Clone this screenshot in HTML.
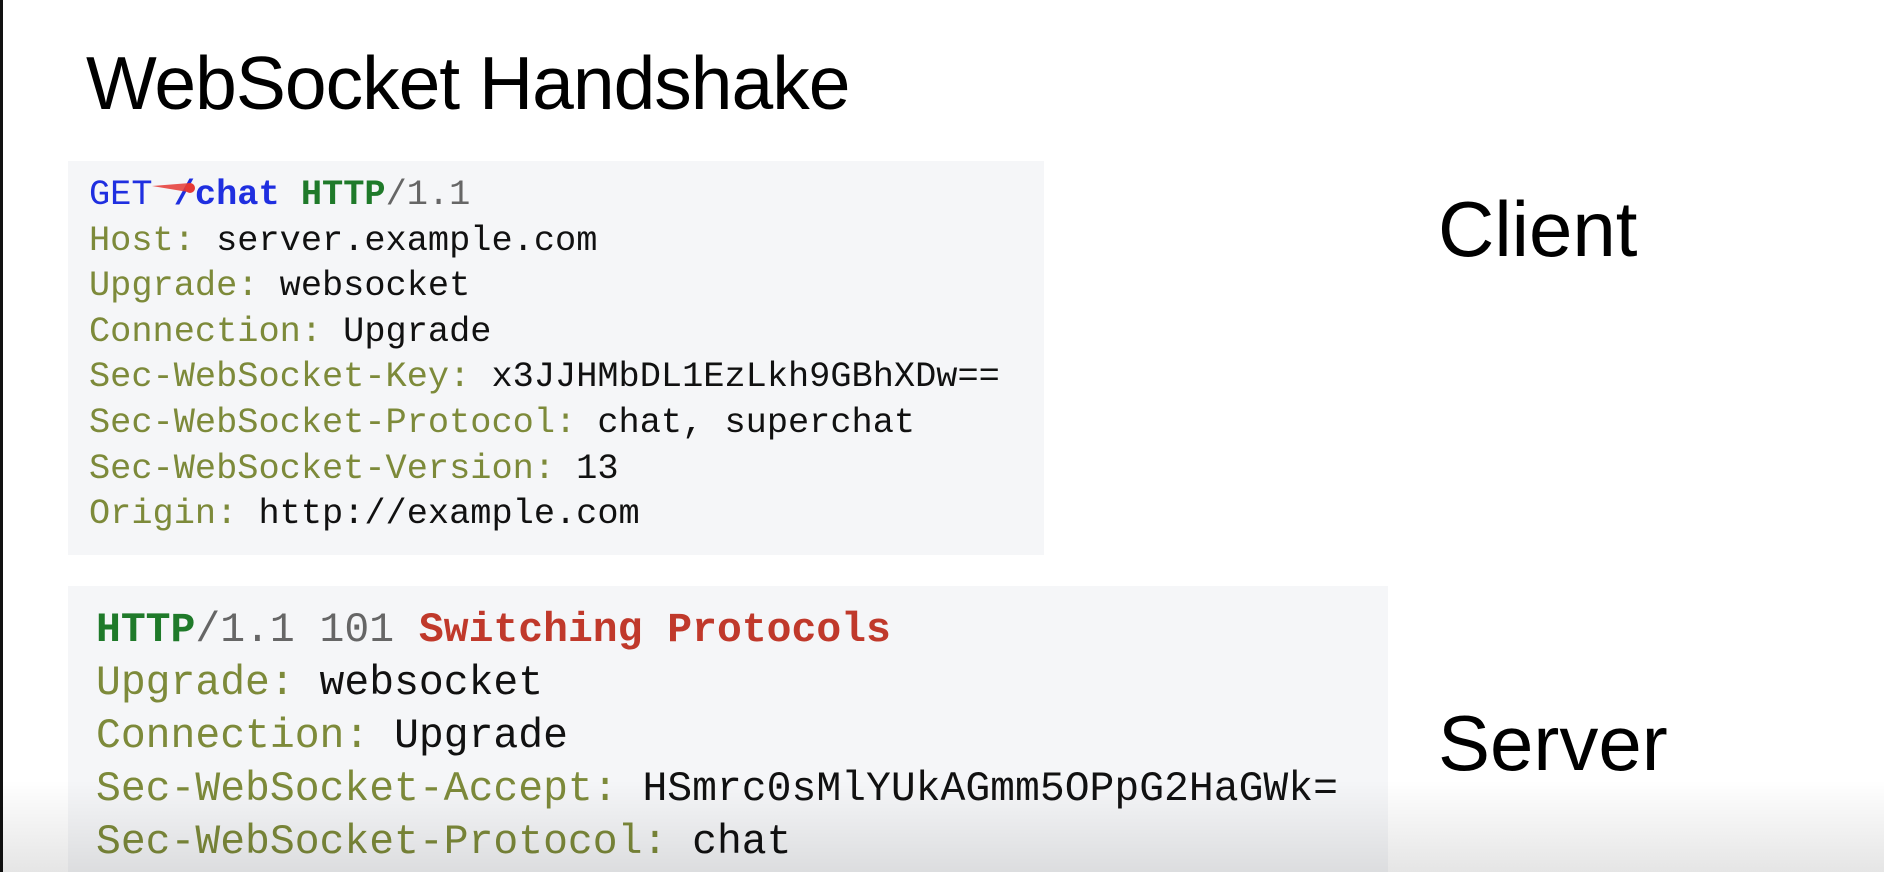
<!DOCTYPE html>
<html><head><meta charset="utf-8"><style>
html,body{margin:0;padding:0}
body{width:1884px;height:872px;background:#fff;position:relative;overflow:hidden;font-family:"Liberation Sans",Arial,sans-serif}
.bl{position:absolute;left:0;top:0;width:3px;height:872px;background:#111}
h1{position:absolute;left:86px;top:40px;margin:0;font-weight:normal;font-size:75px;line-height:86px;color:#000;letter-spacing:-1px}
.box{position:absolute;background:#f5f6f8}
pre{margin:0;font-family:"Liberation Mono","Courier New",monospace;color:#111;position:absolute}
.k{color:#7d8a3a}.b{color:#1f2fe0}.g{color:#1f7a2a;font-weight:bold}.r{color:#c0392b;font-weight:bold}.gr{color:#666}
.lbl{position:absolute;font-size:78px;color:#000}
.fade{position:absolute;left:0;top:780px;width:1884px;height:92px;background:linear-gradient(rgba(0,0,0,0),rgba(0,0,0,0.1))}
</style></head><body>
<div class="bl"></div>
<h1>WebSocket Handshake</h1>
<div class="box" style="left:68px;top:161px;width:976px;height:394px"></div>
<pre style="left:89px;top:173px;font-size:35.3px;line-height:45.6px"><span class="b">GET <span style="font-weight:bold">/chat</span></span> <span class="g">HTTP</span><span class="gr">/1.1</span>
<span class="k">Host:</span> server.example.com
<span class="k">Upgrade:</span> websocket
<span class="k">Connection:</span> Upgrade
<span class="k">Sec-WebSocket-Key:</span> x3JJHMbDL1EzLkh9GBhXDw==
<span class="k">Sec-WebSocket-Protocol:</span> chat, superchat
<span class="k">Sec-WebSocket-Version:</span> 13
<span class="k">Origin:</span> http://example.com</pre>
<svg style="position:absolute;left:150px;top:180px" width="50" height="20"><path d="M2 6 L40 3 L38 12 Z" fill="#e53935" opacity=".85"/><circle cx="40" cy="8" r="5" fill="#e53935"/></svg>
<div class="box" style="left:68px;top:586px;width:1320px;height:286px"></div>
<pre style="left:96px;top:605px;font-size:41.4px;line-height:53px"><span class="g">HTTP</span><span class="gr">/1.1 101</span> <span class="r">Switching Protocols</span>
<span class="k">Upgrade:</span> websocket
<span class="k">Connection:</span> Upgrade
<span class="k">Sec-WebSocket-Accept:</span> HSmrc0sMlYUkAGmm5OPpG2HaGWk=
<span class="k">Sec-WebSocket-Protocol:</span> chat</pre>
<div class="lbl" style="left:1438px;top:184px">Client</div>
<div class="lbl" style="left:1438px;top:698px">Server</div>
<div class="fade"></div>
</body></html>
